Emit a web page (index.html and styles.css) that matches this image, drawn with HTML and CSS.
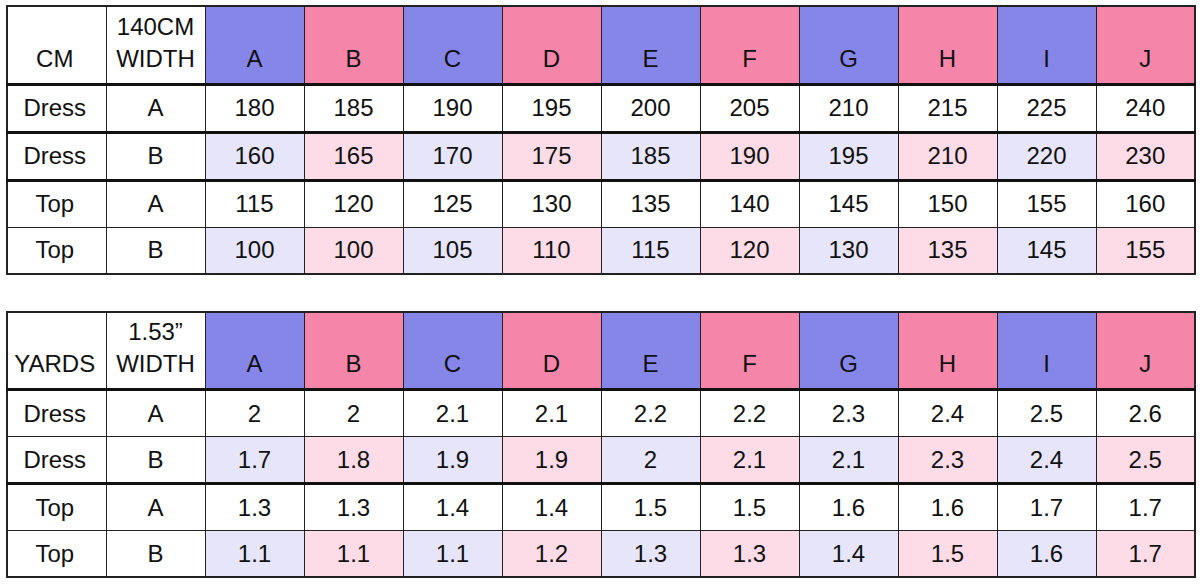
FILE: index.html
```html
<!DOCTYPE html>
<html>
<head>
<meta charset="utf-8">
<link rel="stylesheet" href="styles.css">
</head>
<body>
<div class="page">
<table class="chart">
  <colgroup><col span="12" class="c"></colgroup>
  <tr class="head">
    <th>CM</th><th>140CM<br>WIDTH</th>
    <th class="hb">A</th><th class="hp">B</th><th class="hb">C</th><th class="hp">D</th><th class="hb">E</th>
    <th class="hp">F</th><th class="hb">G</th><th class="hp">H</th><th class="hb">I</th><th class="hp">J</th>
  </tr>
  <tr class="thick">
    <td>Dress</td><td>A</td><td>180</td><td>185</td><td>190</td><td>195</td><td>200</td><td>205</td><td>210</td><td>215</td><td>225</td><td>240</td>
  </tr>
  <tr class="tint thick">
    <td>Dress</td><td>B</td><td>160</td><td>165</td><td>170</td><td>175</td><td>185</td><td>190</td><td>195</td><td>210</td><td>220</td><td>230</td>
  </tr>
  <tr>
    <td>Top</td><td>A</td><td>115</td><td>120</td><td>125</td><td>130</td><td>135</td><td>140</td><td>145</td><td>150</td><td>155</td><td>160</td>
  </tr>
  <tr class="tint">
    <td>Top</td><td>B</td><td>100</td><td>100</td><td>105</td><td>110</td><td>115</td><td>120</td><td>130</td><td>135</td><td>145</td><td>155</td>
  </tr>
</table>

<table class="chart">
  <colgroup><col span="12" class="c"></colgroup>
  <tr class="head">
    <th>YARDS</th><th>1.53”<br>WIDTH</th>
    <th class="hb">A</th><th class="hp">B</th><th class="hb">C</th><th class="hp">D</th><th class="hb">E</th>
    <th class="hp">F</th><th class="hb">G</th><th class="hp">H</th><th class="hb">I</th><th class="hp">J</th>
  </tr>
  <tr>
    <td>Dress</td><td>A</td><td>2</td><td>2</td><td>2.1</td><td>2.1</td><td>2.2</td><td>2.2</td><td>2.3</td><td>2.4</td><td>2.5</td><td>2.6</td>
  </tr>
  <tr class="tint thick">
    <td>Dress</td><td>B</td><td>1.7</td><td>1.8</td><td>1.9</td><td>1.9</td><td>2</td><td>2.1</td><td>2.1</td><td>2.3</td><td>2.4</td><td>2.5</td>
  </tr>
  <tr>
    <td>Top</td><td>A</td><td>1.3</td><td>1.3</td><td>1.4</td><td>1.4</td><td>1.5</td><td>1.5</td><td>1.6</td><td>1.6</td><td>1.7</td><td>1.7</td>
  </tr>
  <tr class="tint">
    <td>Top</td><td>B</td><td>1.1</td><td>1.1</td><td>1.1</td><td>1.2</td><td>1.3</td><td>1.3</td><td>1.4</td><td>1.5</td><td>1.6</td><td>1.7</td>
  </tr>
</table>
</div>
</body>
</html>
```

FILE: styles.css
```css
html, body {
  margin: 0;
  padding: 0;
  background: #ffffff;
}

.page {
  padding: 5px 0 0 6px;
  display: flex;
  flex-direction: column;
  gap: 36px;
}

.chart {
  border-collapse: collapse;
  table-layout: fixed;
  width: 1187px;
  font-family: "Liberation Sans", Arial, sans-serif;
  font-size: 24px;
  color: #111;
  border: 2px solid #222;
}

.chart .c {
  width: 99px;
}

.chart th,
.chart td {
  border: 1px solid #222;
  text-align: center;
  padding: 0;
  font-weight: normal;
}

.chart td {
  height: 45px;
  vertical-align: middle;
  line-height: 28px;
}

.chart td:first-child,
.chart th:first-child {
  padding-right: 4px;
}

.chart th {
  height: 78px;
  vertical-align: bottom;
  line-height: 32px;
  padding-bottom: 8px;
  box-sizing: border-box;
}

.chart .head th {
  border-bottom: 3px solid #111;
}

.chart tr.thick td {
  border-bottom: 3px solid #111;
}

.chart .hb {
  background: #8686e9;
}

.chart .hp {
  background: #f586aa;
}

.chart tr.tint td:nth-child(2n+3) {
  background: #e6e5fa;
}

.chart tr.tint td:nth-child(2n+4) {
  background: #fddce7;
}
```
